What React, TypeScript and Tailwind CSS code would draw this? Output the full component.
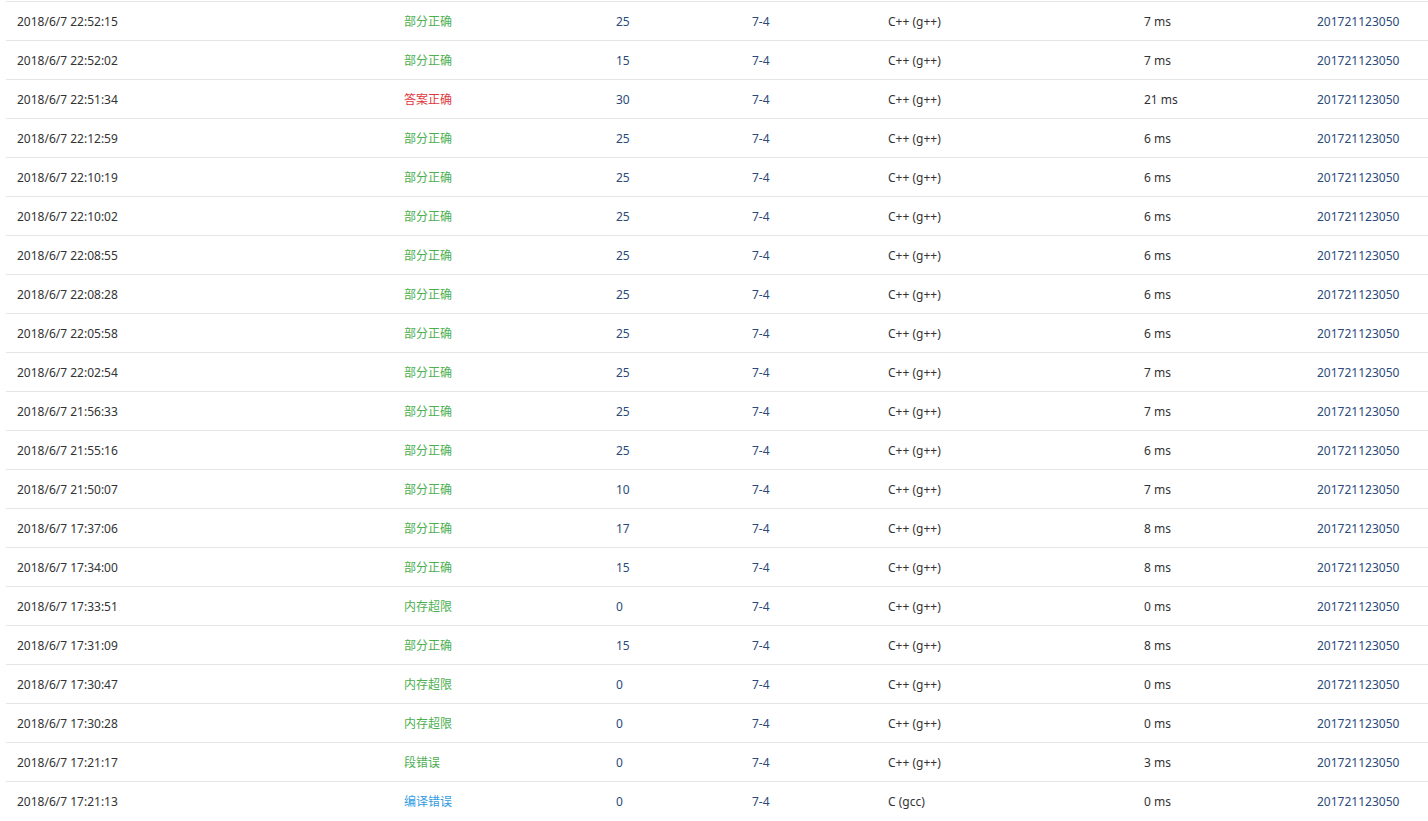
import React from "react";

type Row = [string, string, string, string, string, string];

const rows: Row[] = [
  ["2018/6/7 22:52:15", "部分正确", "25", "C++ (g++)", "7 ms", "pa"],
  ["2018/6/7 22:52:02", "部分正确", "15", "C++ (g++)", "7 ms", "pa"],
  ["2018/6/7 22:51:34", "答案正确", "30", "C++ (g++)", "21 ms", "ac"],
  ["2018/6/7 22:12:59", "部分正确", "25", "C++ (g++)", "6 ms", "pa"],
  ["2018/6/7 22:10:19", "部分正确", "25", "C++ (g++)", "6 ms", "pa"],
  ["2018/6/7 22:10:02", "部分正确", "25", "C++ (g++)", "6 ms", "pa"],
  ["2018/6/7 22:08:55", "部分正确", "25", "C++ (g++)", "6 ms", "pa"],
  ["2018/6/7 22:08:28", "部分正确", "25", "C++ (g++)", "6 ms", "pa"],
  ["2018/6/7 22:05:58", "部分正确", "25", "C++ (g++)", "6 ms", "pa"],
  ["2018/6/7 22:02:54", "部分正确", "25", "C++ (g++)", "7 ms", "pa"],
  ["2018/6/7 21:56:33", "部分正确", "25", "C++ (g++)", "7 ms", "pa"],
  ["2018/6/7 21:55:16", "部分正确", "25", "C++ (g++)", "6 ms", "pa"],
  ["2018/6/7 21:50:07", "部分正确", "10", "C++ (g++)", "7 ms", "pa"],
  ["2018/6/7 17:37:06", "部分正确", "17", "C++ (g++)", "8 ms", "pa"],
  ["2018/6/7 17:34:00", "部分正确", "15", "C++ (g++)", "8 ms", "pa"],
  ["2018/6/7 17:33:51", "内存超限", "0", "C++ (g++)", "0 ms", "pa"],
  ["2018/6/7 17:31:09", "部分正确", "15", "C++ (g++)", "8 ms", "pa"],
  ["2018/6/7 17:30:47", "内存超限", "0", "C++ (g++)", "0 ms", "pa"],
  ["2018/6/7 17:30:28", "内存超限", "0", "C++ (g++)", "0 ms", "pa"],
  ["2018/6/7 17:21:17", "段错误", "0", "C++ (g++)", "3 ms", "pa"],
  ["2018/6/7 17:21:13", "编译错误", "0", "C (gcc)", "0 ms", "ce"],
];

export default function App() {
  return (
    <div
      className="w-[1428px] h-[821px] overflow-hidden bg-white pt-px pl-[6px] text-[12px] leading-[16px] text-[#333333]"
      style={{ fontFamily: '"Noto Sans", "Noto Sans CJK SC", sans-serif' }}
    >
      {rows.map((r, i) => (
        <div
          key={i}
          className="grid grid-cols-[387px_212px_136px_136px_256px_173px_1fr] h-[39px] items-center pt-px border-t border-[#e6e6e6]"
        >
          <div className="pl-[11px]">{r[0]}</div>
          <div
            className={
              "pl-[11px] " +
              (r[5] === "ac"
                ? "text-[#e0373d]"
                : r[5] === "ce"
                ? "text-[#2f9be3]"
                : "text-[#4caf50]")
            }
          >
            {r[1]}
          </div>
          <div className="pl-[11px] text-[#2b4a7b]">{r[2]}</div>
          <div className="pl-[11px] text-[#2b4a7b]">7-4</div>
          <div className="pl-[11px]">{r[3]}</div>
          <div className="pl-[11px]">{r[4]}</div>
          <div className="pl-[11px] text-[#2b4a7b]">201721123050</div>
        </div>
      ))}
    </div>
  );
}
